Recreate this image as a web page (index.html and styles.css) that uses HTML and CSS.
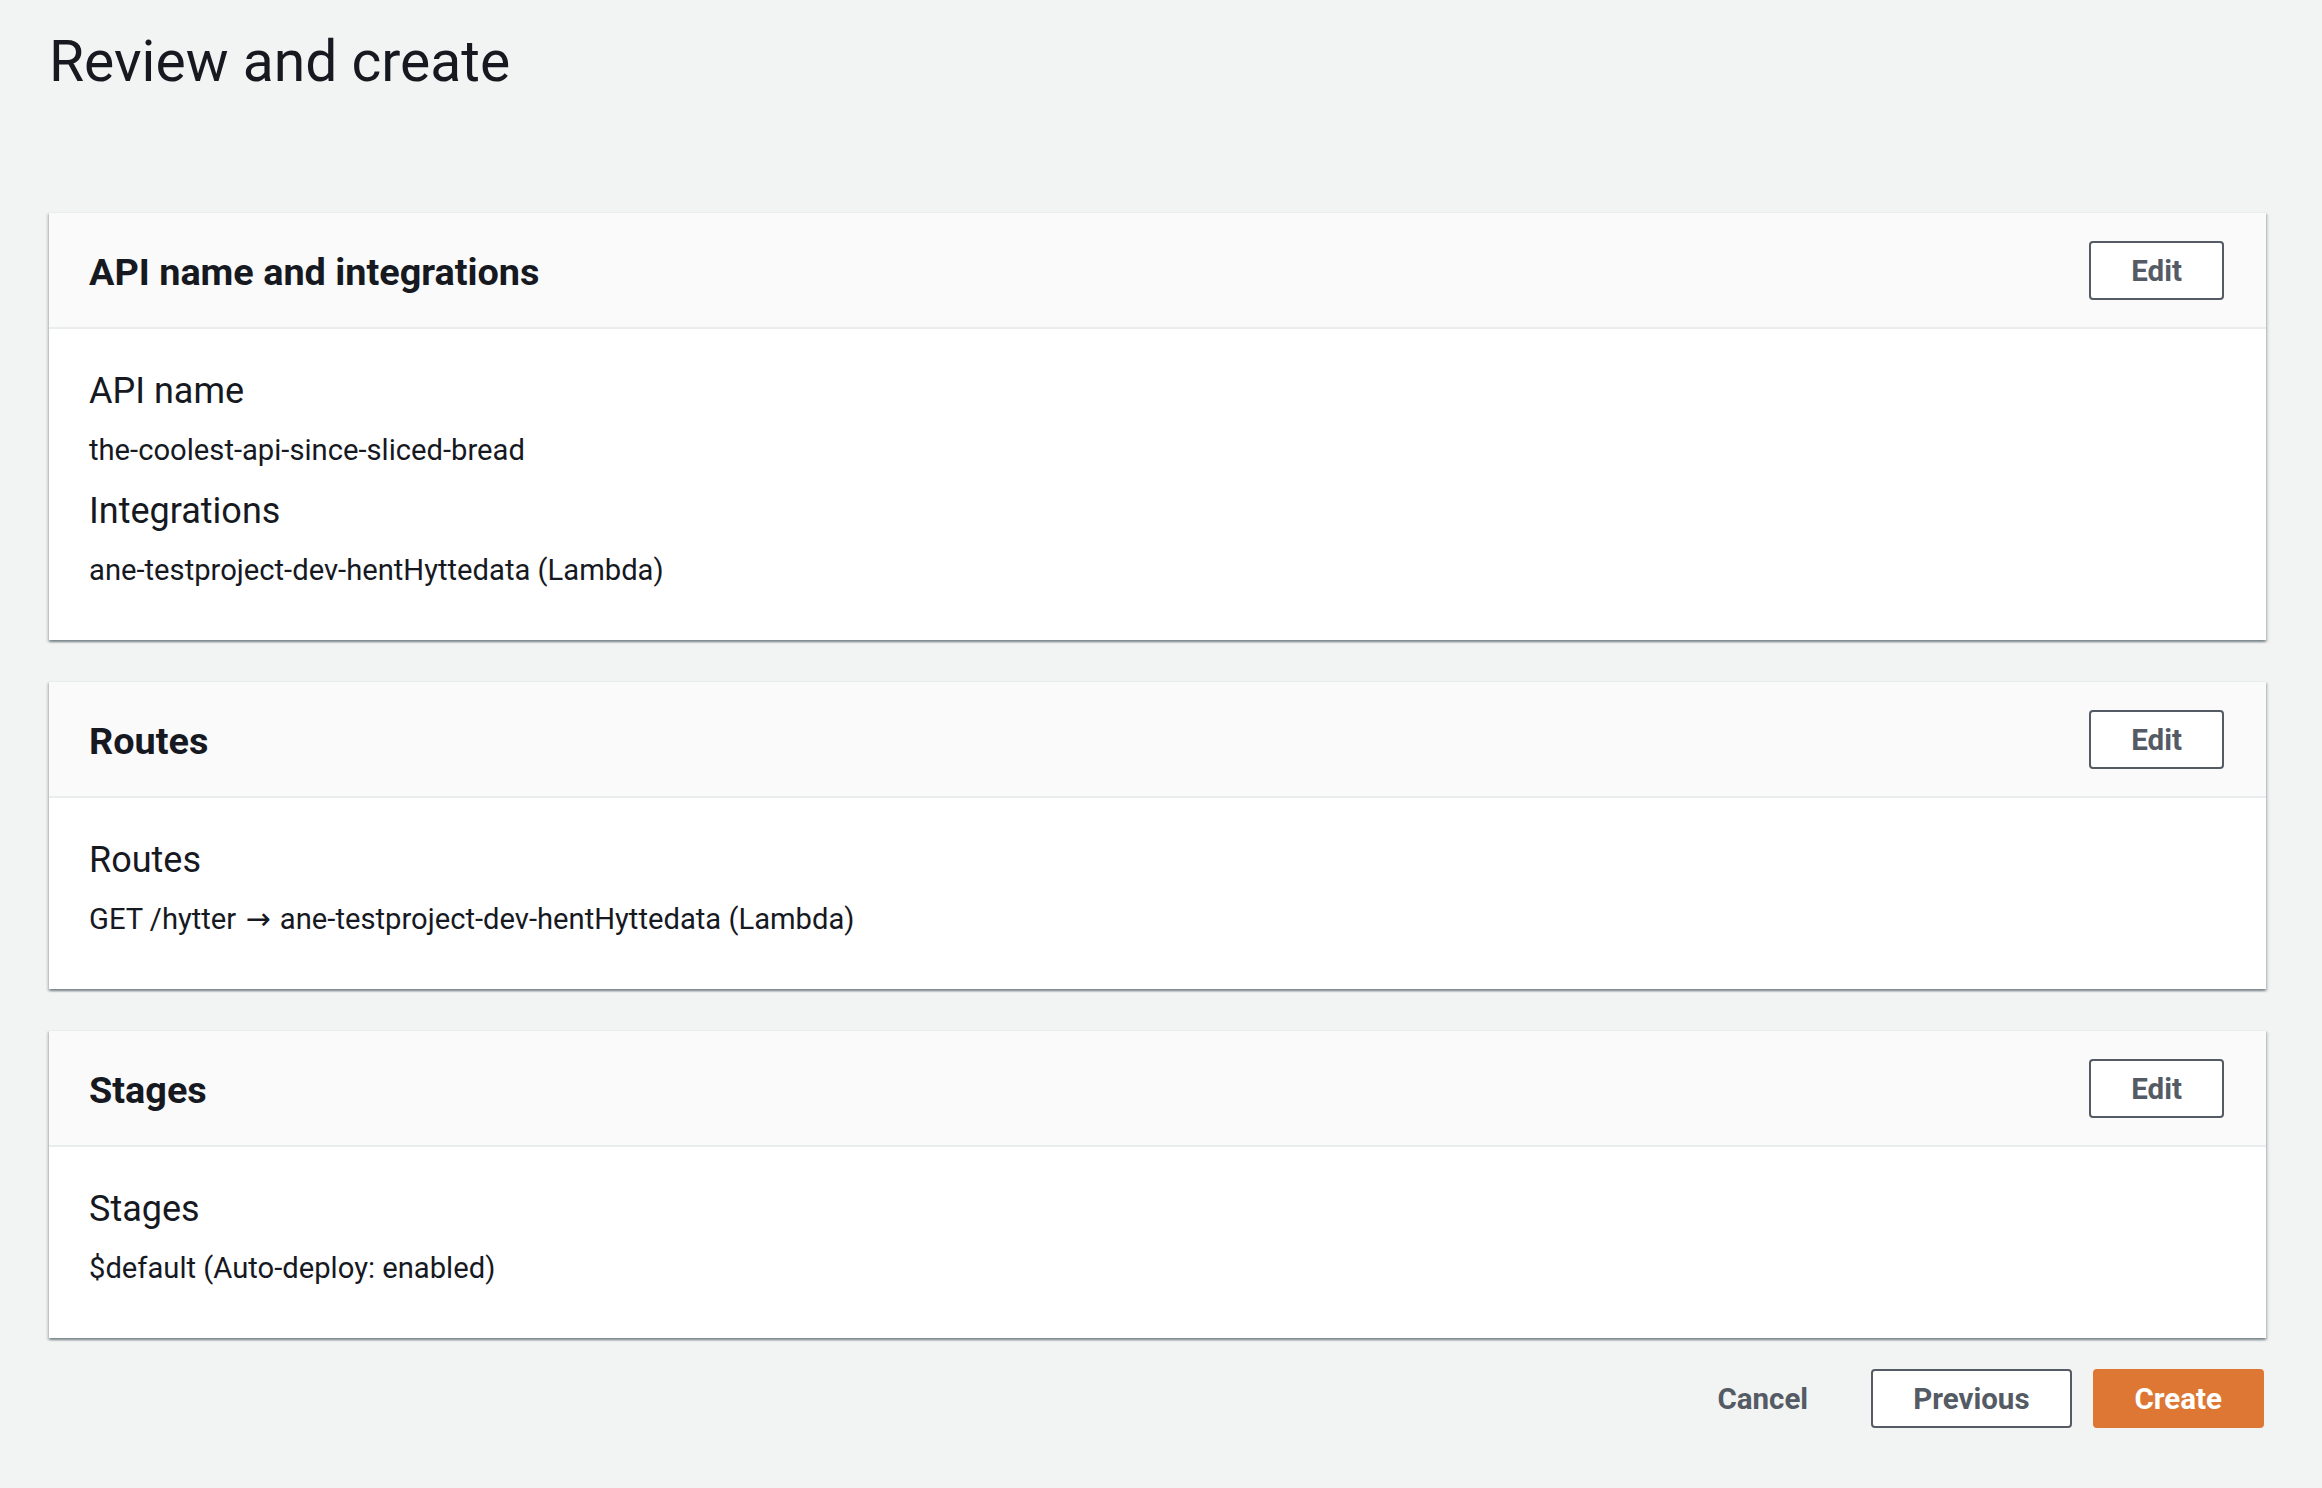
FILE: index.html
```html
<!DOCTYPE html>
<html lang="en">
<head>
<meta charset="utf-8">
<title>Review and create</title>
<link rel="stylesheet" href="styles.css">
</head>
<body>
<main class="page">
  <h1 class="page-title">Review and create</h1>

  <section class="card">
    <header class="card-header">
      <h2 class="card-title">API name and integrations</h2>
      <button class="btn btn-normal">Edit</button>
    </header>
    <div class="card-body">
      <div class="kv-label">API name</div>
      <div class="kv-value">the-coolest-api-since-sliced-bread</div>
      <div class="kv-label kv-next">Integrations</div>
      <div class="kv-value">ane-testproject-dev-hentHyttedata (Lambda)</div>
    </div>
  </section>

  <section class="card">
    <header class="card-header">
      <h2 class="card-title">Routes</h2>
      <button class="btn btn-normal">Edit</button>
    </header>
    <div class="card-body">
      <div class="kv-label">Routes</div>
      <div class="kv-value">GET /hytter <span class="arrow">→</span> ane-testproject-dev-hentHyttedata (Lambda)</div>
    </div>
  </section>

  <section class="card">
    <header class="card-header">
      <h2 class="card-title">Stages</h2>
      <button class="btn btn-normal">Edit</button>
    </header>
    <div class="card-body">
      <div class="kv-label">Stages</div>
      <div class="kv-value">$default (Auto-deploy: enabled)</div>
    </div>
  </section>

  <footer class="actions">
    <button class="btn btn-link">Cancel</button>
    <button class="btn btn-normal">Previous</button>
    <button class="btn btn-primary">Create</button>
  </footer>
</main>
</body>
</html>
```

FILE: styles.css
```css
html, body {
  margin: 0;
  padding: 0;
}

body {
  background: #f2f3f3;
  color: #16191f;
  font-family: Roboto, "Liberation Sans", sans-serif;
  font-size: 29px;
  width: 2322px;
  min-height: 1488px;
}

.page {
  padding: 26px 56px 40px 49px;
}

.page-title {
  margin: 0 0 114px 0;
  font-size: 57px;
  line-height: 72px;
  font-weight: 400;
  color: #16191f;
}

.card {
  background: #ffffff;
  margin-bottom: 41px;
  box-shadow: 0 2px 2px 0 rgba(0, 28, 36, 0.35),
              2px 2px 2px 0 rgba(0, 28, 36, 0.12),
              -2px 2px 2px 0 rgba(0, 28, 36, 0.12);
  border-top: 1px solid #eaeded;
}

.card:last-of-type {
  margin-bottom: 0;
}

.card-header {
  display: flex;
  align-items: center;
  justify-content: space-between;
  height: 114px;
  padding: 0 42px 0 40px;
  background: #fafafa;
  border-bottom: 2px solid #eaeded;
}

.card-title {
  margin: 0;
  padding-top: 3px;
  font-size: 37.8px;
  line-height: 44px;
  font-weight: 700;
  color: #16191f;
}

.card-body {
  padding: 42px 40px 50px 40px;
}

.kv-label {
  font-size: 36px;
  line-height: 40px;
  color: #16191f;
  margin-bottom: 19px;
}

.kv-next {
  margin-top: 21px;
}

.kv-value {
  font-size: 29.2px;
  line-height: 40px;
  color: #16191f;
}

.arrow {
  font-family: "DejaVu Sans", sans-serif;
  font-size: 30px;
  margin: 0 2px;
}

.btn {
  font-family: inherit;
  font-size: 29.5px;
  font-weight: 700;
  height: 59px;
  padding: 3px 40px 0 40px;
  border-radius: 4px;
  cursor: pointer;
  line-height: 1;
}

.btn-normal {
  background: #ffffff;
  color: #545b64;
  border: 2px solid #545b64;
}

.btn-link {
  background: transparent;
  color: #545b64;
  border: 2px solid transparent;
}

.btn-primary {
  background: #dd7733;
  color: #ffffff;
  border: 2px solid #dd7733;
}

.actions {
  display: flex;
  justify-content: flex-end;
  align-items: center;
  gap: 21px;
  margin-top: 31px;
  margin-right: 2px;
}
```
